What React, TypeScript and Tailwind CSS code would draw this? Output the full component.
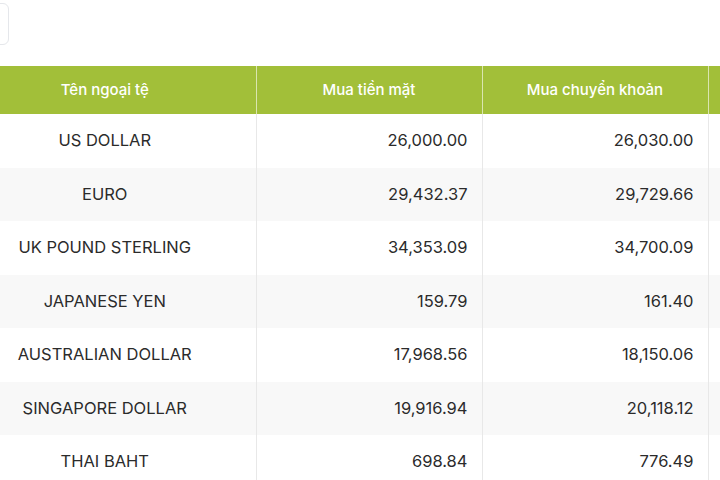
const rows = [
  ["US DOLLAR", "26,000.00", "26,030.00"],
  ["EURO", "29,432.37", "29,729.66"],
  ["UK POUND STERLING", "34,353.09", "34,700.09"],
  ["JAPANESE YEN", "159.79", "161.40"],
  ["AUSTRALIAN DOLLAR", "17,968.56", "18,150.06"],
  ["SINGAPORE DOLLAR", "19,916.94", "20,118.12"],
  ["THAI BAHT", "698.84", "776.49"],
]

export default function App() {
  return (
    <div
      className="w-[720px] h-[480px] overflow-hidden bg-white text-[#2b2b2b]"
      style={{ fontFamily: "Inter, 'Noto Sans', sans-serif" }}
    >
      <div className="h-[66px] pt-[3px]">
        <div className="w-[10px] h-[42px] -ml-px border border-gray-200 rounded-r-md" />
      </div>
      <table className="table-fixed border-collapse w-[986px] -ml-[46px]">
        <colgroup>
          <col className="w-[302px]" />
          <col className="w-[226px]" />
          <col className="w-[226px]" />
          <col className="w-[232px]" />
        </colgroup>
        <thead>
          <tr className="bg-[#a2bf39] text-white text-[15px] h-[48px]">
            <th className="font-medium text-center border-r border-white/60">Tên ngoại tệ</th>
            <th className="font-medium text-center border-r border-white/60">Mua tiền mặt</th>
            <th className="font-medium text-center border-r border-white/60">Mua chuyển khoản</th>
            <th className="font-medium text-center"></th>
          </tr>
        </thead>
        <tbody>
          {rows.map((r, i) => (
            <tr key={r[0]} className={`h-[53.5px] text-[16.5px] ${i % 2 === 1 ? "bg-[#f8f8f8]" : "bg-white"}`}>
              <td className="text-center border-r border-[#e8e8e8]">{r[0]}</td>
              <td className="text-right pr-[14px] border-r border-[#e8e8e8]">{r[1]}</td>
              <td className="text-right pr-[14px] border-r border-[#e8e8e8]">{r[2]}</td>
              <td className="text-right pr-[14px]"></td>
            </tr>
          ))}
        </tbody>
      </table>
    </div>
  )
}
